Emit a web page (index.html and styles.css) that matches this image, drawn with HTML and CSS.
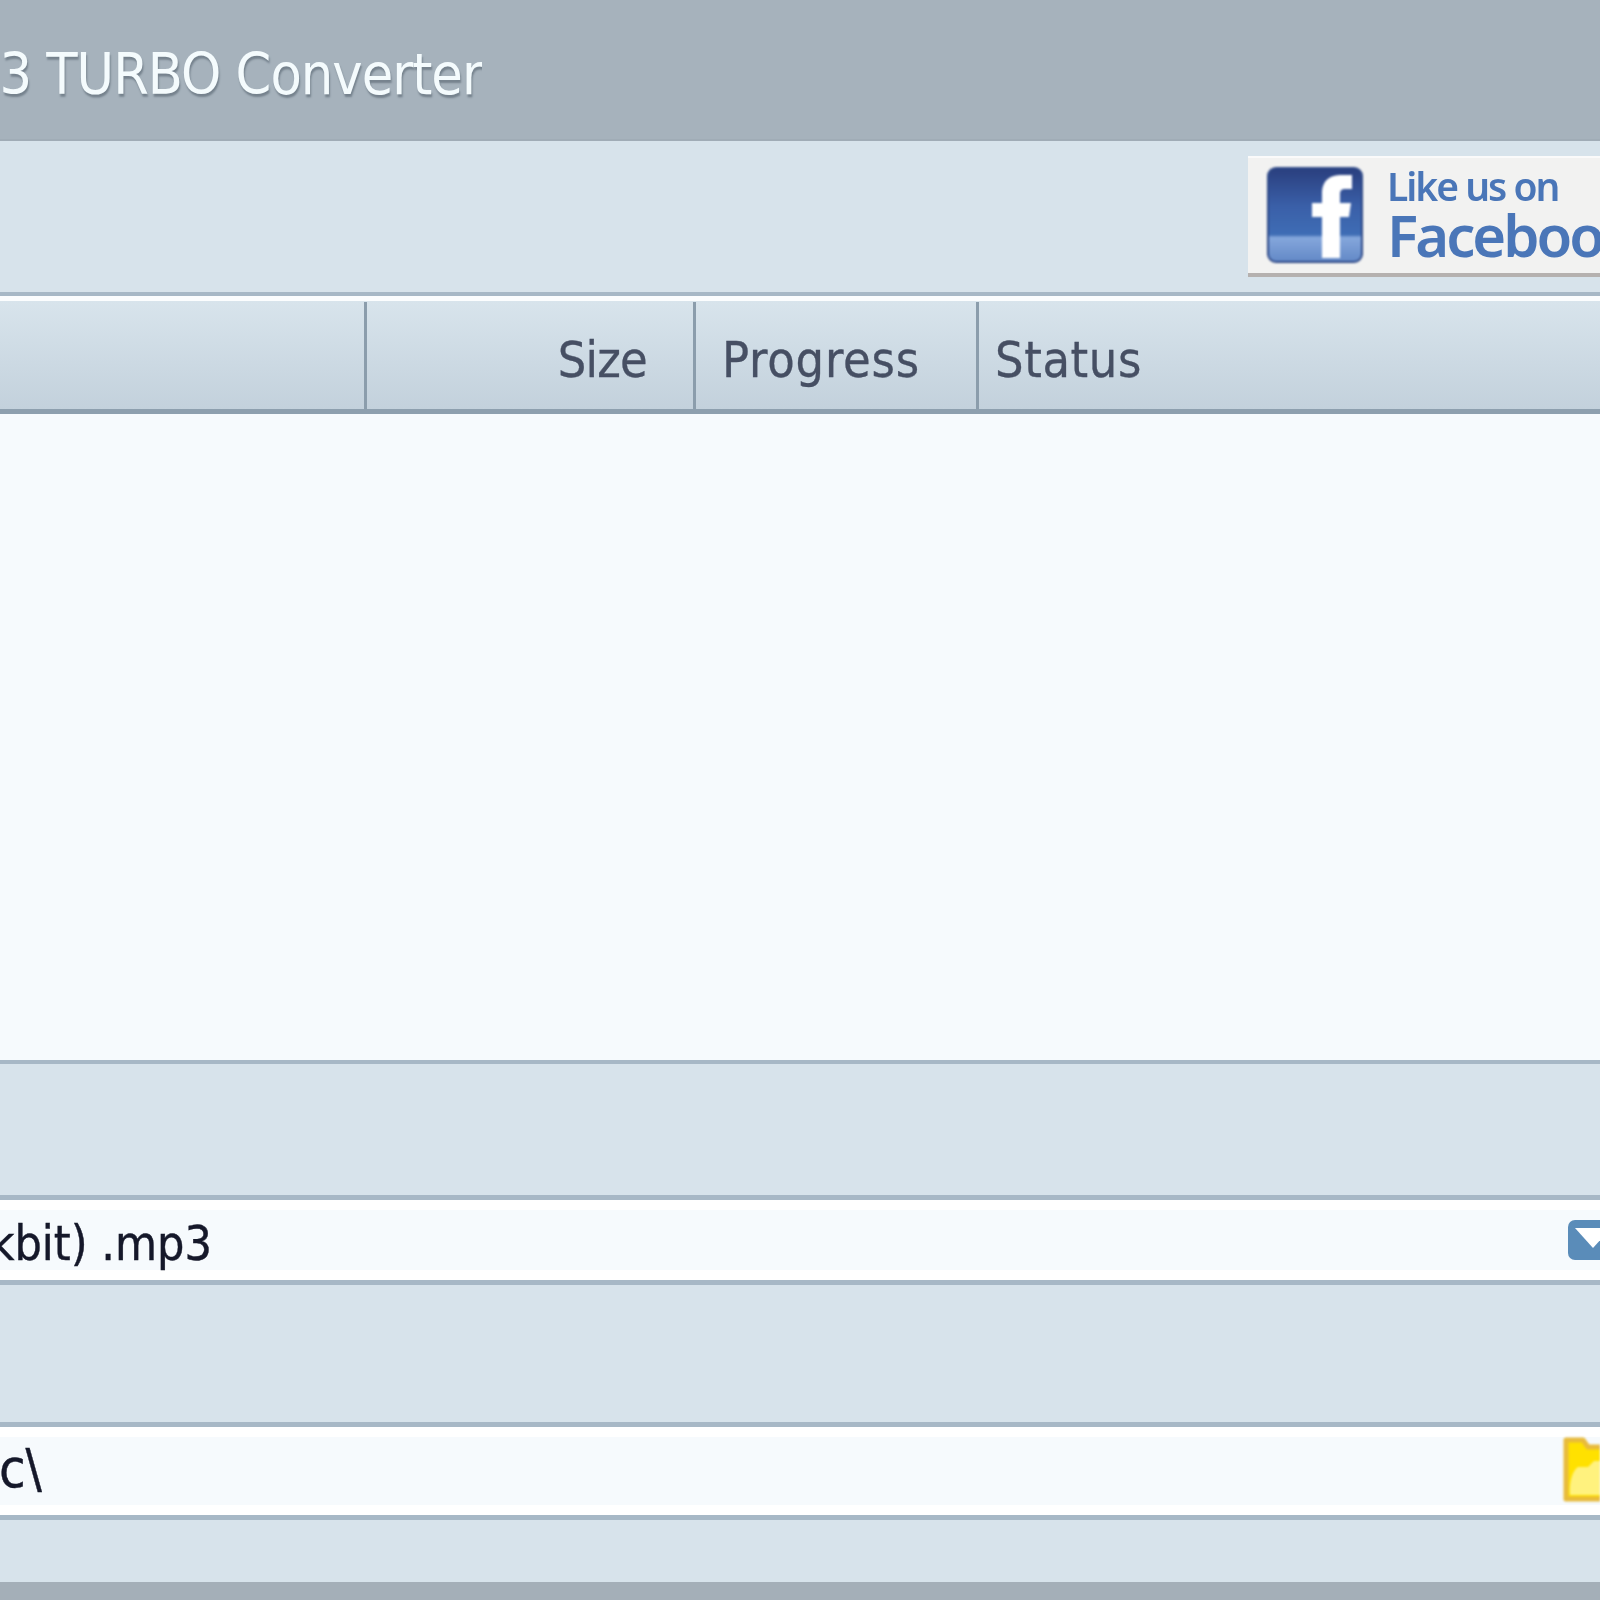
FILE: index.html
```html
<!DOCTYPE html>
<html lang="en">
<head>
<meta charset="utf-8">
<title>MP3 TURBO Converter</title>
<link rel="stylesheet" href="styles.css">
</head>
<body>
<div class="app">
  <header class="titlebar"><div class="title-clip"><span class="title">3 TURBO Converter</span></div></header>
  <section class="toolbar">
    <a class="fb">
      <svg class="fb-icon" viewBox="0 0 96 96" aria-hidden="true">
        <defs>
          <linearGradient id="fbg" x1="0" y1="0" x2="0" y2="1">
            <stop offset="0" stop-color="#2a3f7e"/>
            <stop offset=".4" stop-color="#3a5fa8"/>
            <stop offset=".71" stop-color="#3f6db5"/>
            <stop offset=".74" stop-color="#85a7dc"/>
            <stop offset="1" stop-color="#6288c6"/>
          </linearGradient>
        </defs>
        <rect x="1" y="1" width="94" height="94" rx="8" fill="url(#fbg)" stroke="#2f4a88" stroke-width="2"/>
        <path d="M55 91V50H45V36H55V27C55 13 63 8 75 8H85V22H78C74 22 73 24 73 28V36H84L82 50H73V91Z" fill="#fff"/>
      </svg>
      <span class="fb-text"><span class="fb-like">Like us on</span><span class="fb-name">Facebook</span></span>
    </a>
  </section>
  <div class="list-head">
    <div class="col col-a"></div>
    <div class="col col-b">Size</div>
    <div class="col col-c">Progress</div>
    <div class="col col-d">Status</div>
  </div>
  <div class="list"></div>
  <div class="gap gap-a"></div>
  <div class="field field-a">
    <span class="value">kbit) .mp3</span>
    <span class="combo"><svg viewBox="0 0 40 40" aria-hidden="true"><rect width="48" height="40" rx="7" fill="#5a8cb9"/><path d="M7 8H43L25 28Z" fill="#fff"/></svg></span>
  </div>
  <div class="gap gap-b"></div>
  <div class="field field-b">
    <span class="value">c\</span>
    <span class="folder"><svg viewBox="0 0 37 65" aria-hidden="true"><path d="M3 3H20L25 10H45V62H3Z" fill="#ffe100" stroke="#e8bb3c" stroke-width="5" stroke-linejoin="round"/><path d="M7 58C6 46 9 34 15 30H25L31 24H45V58Z" fill="#fff27e"/></svg></span>
  </div>
  <div class="gap gap-c"></div>
  <footer class="statusbar"></footer>
</div>
</body>
</html>
```
FILE: styles.css
```css
* { box-sizing: border-box; }
html, body { margin: 0; padding: 0; }
body { width: 1600px; height: 1600px; overflow: hidden; background: #d7e3eb; font-family: "DejaVu Sans", "Noto Sans", sans-serif; font-stretch: condensed; }
.app { width: 1600px; height: 1600px; display: flex; flex-direction: column; overflow: hidden; }

.titlebar { height: 141px; flex: none; background: #a6b2bc; border-bottom: 2px solid #a0acb6; padding-top: 38px; }
.title-clip { width: 482px; display: flex; justify-content: flex-end; overflow: hidden; white-space: nowrap; }
.title { font-size: 57px; line-height: 72px; letter-spacing: -1px; color: #f4fbfd; text-shadow: 1px 3px 2px #75828d; filter: blur(.6px); }

.toolbar { height: 155px; flex: none; display: flex; padding: 15px 0 0 1248px; background: #d7e3eb; border-bottom: 4px solid #a7b8c6; }
.fb { flex: none; display: flex; width: 400px; height: 121px; padding: 9px 0 0 19px; gap: 24px; background: #f2f2f1; border-top: 2px solid #fafafa; border-bottom: 4px solid #b5b1af; }
.fb-icon { width: 96px; height: 96px; flex: none; filter: blur(1px); }
.fb-text { display: flex; flex-direction: column; color: #4a76b8; filter: blur(.7px); white-space: nowrap; font-family: "Noto Sans", sans-serif; font-stretch: normal; }
.fb-like { font-size: 39px; line-height: 38px; font-weight: 600; letter-spacing: -2px; }
.fb-name { font-size: 58px; line-height: 60px; font-weight: 600; letter-spacing: -3px; }

.list-head { height: 118px; flex: none; display: grid; grid-template-columns: 367px 329px 283px 1fr; padding-top: 1px; background: linear-gradient(#d8e4ec, #c3d1dc); border-top: 5px solid #fbfdfe; border-bottom: 5px solid #8d9fae; font-size: 50px; line-height: 60px; letter-spacing: .6px; color: #464f63; -webkit-text-stroke: .3px #464f63; }
.col { padding-top: 28px; border-right: 3px solid #8b9dac; filter: blur(.6px); white-space: nowrap; }
.col-b { text-align: right; padding-right: 46px; letter-spacing: -.8px; }
.col-c { padding-left: 26px; letter-spacing: .8px; }
.col-d { padding-left: 16px; border-right: 0; }

.list { height: 646px; flex: none; background: #f6fafd; }
.gap { flex: none; background: #d7e3eb; }
.gap-a { height: 135px; border-top: 4px solid #a7b8c6; }
.gap-b { height: 137px; }
.gap-c { height: 62px; }

.field { flex: none; display: flex; align-items: flex-start; justify-content: space-between; overflow: hidden; background: #f6fafd; border-top: 5px solid #a7b8c6; border-bottom: 5px solid #a7b8c6; position: relative; font-size: 48px; color: #15182a; -webkit-text-stroke: .4px #15182a; white-space: nowrap; }
.field-a { height: 90px; }
.field-b { height: 98px; }
.field::before { content: ""; position: absolute; left: 0; right: 0; top: 0; height: 10px; background: #fff; }
.field::after { content: ""; position: absolute; left: 0; right: 0; bottom: 0; height: 10px; background: #fff; }
.value { display: flex; justify-content: flex-end; overflow: hidden; position: relative; z-index: 1; filter: blur(.5px); }
.field-a .value { width: 212px; line-height: 60px; padding-top: 13px; }
.field-b .value { width: 42px; line-height: 60px; padding-top: 12px; font-size: 54px; }
.combo { position: relative; z-index: 1; width: 32px; height: 40px; margin-top: 20px; display: block; overflow: hidden; filter: blur(.5px); }
.combo svg { width: 40px; height: 40px; display: block; }
.folder { position: relative; z-index: 1; width: 37px; height: 65px; margin-top: 10px; display: block; overflow: hidden; filter: blur(.8px); }
.folder svg { width: 37px; height: 65px; display: block; }
.statusbar { flex: 1; background: #a4afb8; }
```
